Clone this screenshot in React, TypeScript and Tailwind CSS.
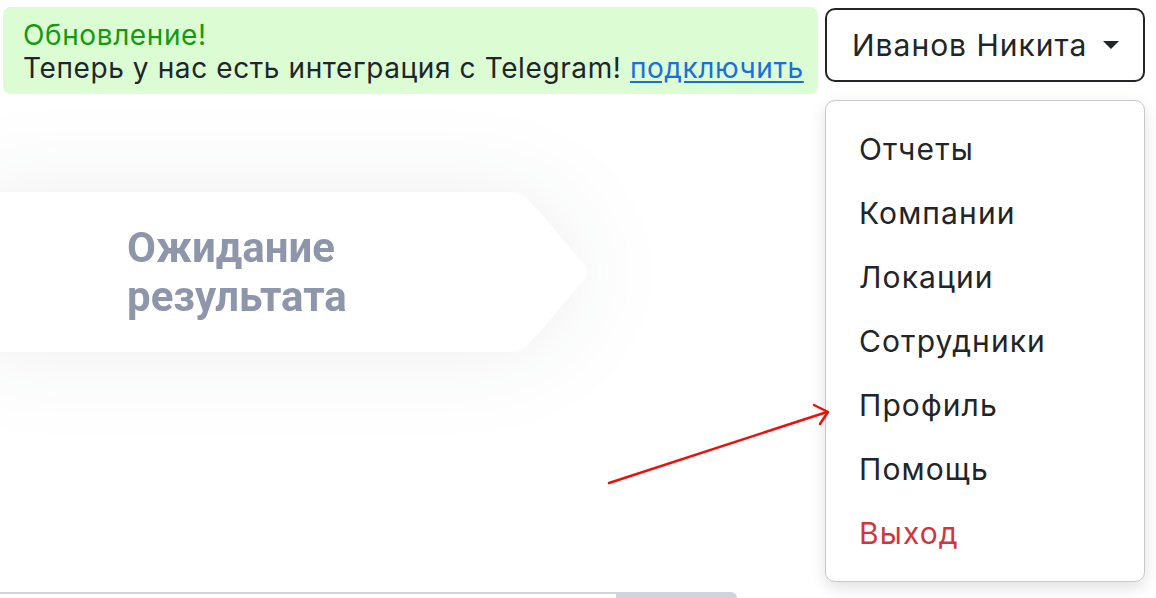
const menuItems = ["Отчеты", "Компании", "Локации", "Сотрудники", "Профиль", "Помощь"];

export default function App() {
  return (
    <div className="relative w-[1156px] h-[598px] overflow-hidden bg-white font-['Inter',sans-serif]">
      {/* top row */}
      <div className="flex items-start">
        <div className="ml-[3px] mt-[7px] w-[815px] h-[87px] rounded-lg bg-[#dcfcd4] pl-[20px] pt-[12px] text-[28px] leading-[33px] tracking-[0.6px]">
          <div className="text-[#139a13]">Обновление!</div>
          <div className="text-[#212529]">
            Теперь у нас есть интеграция с Telegram!{" "}
            <a href="#" className="text-[#1a6ee0] underline underline-offset-[3px]">
              подключить
            </a>
          </div>
        </div>

        <button className="ml-[7px] mt-[8px] flex h-[74px] w-[320px] items-center rounded-[10px] border-2 border-[#212529] bg-white pl-[25px] text-[30px] tracking-[1px] text-[#212529]">
          <span>Иванов Никита</span>
          <span className="ml-[16px] h-0 w-0 border-x-[8px] border-t-[8px] border-x-transparent border-t-[#212529]" />
        </button>
      </div>

      {/* status card */}
      <div className="mt-[98px] -ml-[30px] w-[620px] h-[160px] drop-shadow-[0_0_45px_rgba(30,40,70,0.08)]">
        <div className="h-full w-full bg-white [clip-path:path('M0_0_H543_Q553_0_560_9_L614_72_Q620_80_614_88_L560_151_Q553_160_543_160_H0_Z')] flex flex-col justify-center pl-[157px]">
          <div className="font-['Roboto',sans-serif] font-bold text-[42px] leading-[49px] text-[#8d96aa]">
            Ожидание
            <br />
            результата
          </div>
        </div>
      </div>

      {/* bottom bar */}
      <div className="mt-[240px] flex items-start">
        <div className="h-[2px] w-[616px] bg-[#d1d4dc]" />
        <div className="h-[8px] w-[121px] rounded-tr-[6px] bg-[#d1d4dc]" />
      </div>

      {/* dropdown */}
      <div className="absolute left-[825px] top-[100px] w-[320px] h-[482px] rounded-[10px] border border-[#c8c8c8] bg-white shadow-[0_6px_16px_rgba(0,0,0,0.12)] pt-[16px]">
        {menuItems.map((item) => (
          <div key={item} className="h-[64px] flex items-center pl-[33px] text-[30px] tracking-[1.1px] text-[#212529]">
            {item}
          </div>
        ))}
        <div className="h-[64px] flex items-center pl-[33px] text-[30px] tracking-[1.1px] text-[#d33440]">Выход</div>
      </div>

      {/* red pointer */}
      <svg className="absolute left-0 top-0 pointer-events-none" width="1156" height="598">
        <line x1="609" y1="483" x2="827" y2="412" stroke="#e8120c" strokeWidth="2.5" strokeLinecap="round" />
        <polyline points="814,405 828,412 820,424" fill="none" stroke="#e8120c" strokeWidth="2.5" strokeLinecap="round" strokeLinejoin="round" />
      </svg>
    </div>
  );
}
